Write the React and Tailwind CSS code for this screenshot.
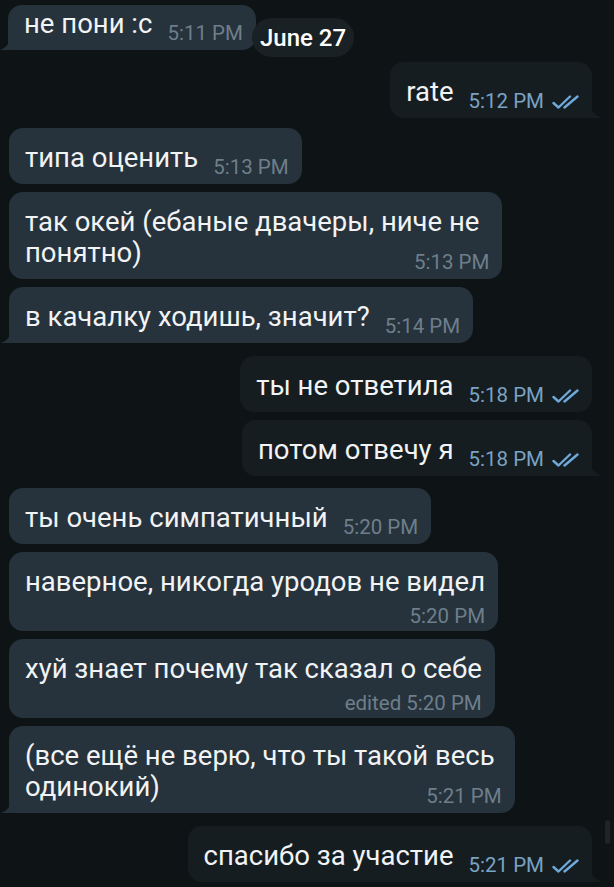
import React from 'react';

// сообщения чата, сверху вниз
const messages = [
  { out: false, lines: ['не пони :с'], time: '5:11 PM', mode: 'row', tail: true, gap: 'mt-0', first: true },
  { out: true, lines: ['rate'], time: '5:12 PM', mode: 'row', tail: true, gap: 'mt-3' },
  { out: false, lines: ['типа оценить'], time: '5:13 PM', mode: 'row', gap: 'mt-[10px]' },
  { out: false, lines: ['так окей (ебаные двачеры, ниче не', 'понятно)'], time: '5:13 PM', mode: 'overlap', gap: 'mt-2', extra: 'pr-[10px]' },
  { out: false, lines: ['в качалку ходишь, значит?'], time: '5:14 PM', mode: 'row', tail: true, gap: 'mt-2' },
  { out: true, lines: ['ты не ответила'], time: '5:18 PM', mode: 'row', gap: 'mt-[13px]' },
  { out: true, lines: ['потом отвечу я'], time: '5:18 PM', mode: 'row', tail: true, gap: 'mt-2' },
  { out: false, lines: ['ты очень симпатичный'], time: '5:20 PM', mode: 'row', gap: 'mt-3' },
  { out: false, lines: ['наверное, никогда уродов не видел'], time: '5:20 PM', mode: 'below', gap: 'mt-2' },
  { out: false, lines: ['хуй знает почему так сказал о себе'], time: '5:20 PM', edited: true, mode: 'below', gap: 'mt-2' },
  { out: false, lines: ['(все ещё не верю, что ты такой весь', 'одинокий)'], time: '5:21 PM', mode: 'overlap', tail: true, gap: 'mt-2', extra: 'pr-[7px]' },
  { out: true, lines: ['спасибо за участие'], time: '5:21 PM', mode: 'row', tail: true, gap: 'mt-[13px]' },
];

function Checks() {
  return (
    <svg width="27" height="14" viewBox="0 0 27 14" className="ml-[8px]" fill="none">
      <path d="M1.5 8 L6.5 12.5 L18 1.5" stroke="#6fa9d9" strokeWidth="2.4" strokeLinecap="round" strokeLinejoin="round" />
      <path d="M12.5 12.5 L25.5 1.5" stroke="#6fa9d9" strokeWidth="2.4" strokeLinecap="round" />
    </svg>
  );
}

function Time({ m }) {
  return (
    <span className={`flex items-center whitespace-nowrap text-[20.5px] leading-[19px] ${m.out ? 'text-[#79a3c4]' : 'text-[#6e7f8b]'}`}>
      {m.edited ? 'edited ' : ''}
      {m.time}
      {m.out && <Checks />}
    </span>
  );
}

function Tail({ out }) {
  if (out) {
    return (
      <svg width="12" height="16" viewBox="0 0 12 16" className="absolute bottom-0 right-[-10px]">
        <path d="M0 0 C0 8 4 13 12 16 H0 Z" fill="#161d21" />
      </svg>
    );
  }
  return (
    <svg width="10" height="14" viewBox="0 0 10 14" className="absolute bottom-0 left-[-8px]">
      <path d="M10 0 C10 7 6 12 0 14 H10 Z" fill="#26323c" />
    </svg>
  );
}

function Bubble({ m }) {
  const side = m.out
    ? 'self-end mr-[22px] bg-[#161d21]'
    : `self-start ${m.first ? 'ml-[8px]' : 'ml-[9px]'} bg-[#26323c]`;
  const corner = m.tail ? (m.out ? 'rounded-[14px] rounded-br-[4px]' : 'rounded-[14px] rounded-bl-[4px]') : 'rounded-[14px]';

  let body;
  if (m.mode === 'row') {
    body = (
      <div className={`flex items-end ${m.first ? 'pt-[3px]' : 'pt-[14px]'} pb-[7px] pl-4 pr-[13px]`}>
        <div className="mb-[4px] whitespace-nowrap leading-[31px]">{m.lines[0]}</div>
        <div className="ml-[15px]">
          <Time m={m} />
        </div>
      </div>
    );
  } else if (m.mode === 'overlap') {
    body = (
      <div className="pt-[14px] pb-[7px] pl-4 pr-[13px]">
        {m.lines.map((l) => (
          <div key={l} className={`whitespace-nowrap leading-[31px] ${m.extra}`}>{l}</div>
        ))}
        <div className="-mt-[15px] flex justify-end">
          <Time m={m} />
        </div>
      </div>
    );
  } else {
    body = (
      <div className="pt-[14px] pb-[5px] pl-4 pr-[13px]">
        <div className="whitespace-nowrap leading-[31px]">{m.lines[0]}</div>
        <div className="mt-[10px] flex justify-end">
          <Time m={m} />
        </div>
      </div>
    );
  }

  return (
    <div className={`relative ${side} ${corner} ${m.gap} text-[27.5px] text-[#f1f3f4]`}>
      {body}
      {m.tail && <Tail out={m.out} />}
    </div>
  );
}

export default function App() {
  return (
    <div className="relative h-[887px] w-[614px] overflow-hidden bg-[#0e1316] font-['Roboto','Liberation_Sans',sans-serif]">
      <div className="flex flex-col pt-[5px]">
        {messages.map((m, i) => (
          <Bubble key={i} m={m} />
        ))}
      </div>

      {/* плавающая дата */}
      <div className="absolute left-[252px] top-[18px] flex h-[39px] items-center rounded-full bg-[#1a2125] px-[8px] text-[24px] font-medium text-white">
        June 27
      </div>

      {/* полоса прокрутки */}
      <div className="absolute right-[4px] top-[820px] h-[24px] w-[5px] rounded-sm bg-[#1e2529]" />
    </div>
  );
}
